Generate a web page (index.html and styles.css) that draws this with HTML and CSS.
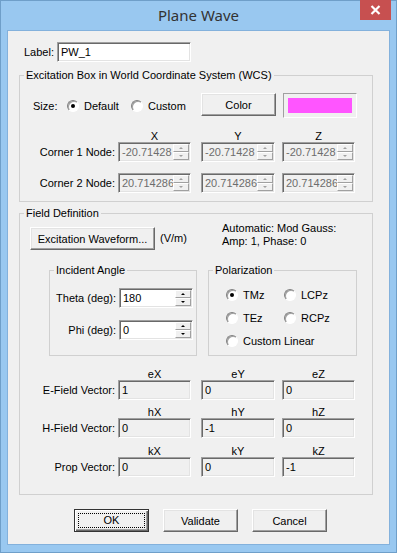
FILE: index.html
```html
<!DOCTYPE html>
<html lang="en">
<head>
    <meta charset="UTF-8">
    <title>Plane Wave</title>
    <link rel="stylesheet" href="styles.css">
</head>
<body>
    <div class="window">
        <div class="titlebar">
            <span></span>
            <div class="title">Plane Wave</div>
            <button class="close" title="Close">
                <svg width="11" height="10" viewBox="0 0 11 10"><path d="M1.5 1 L9.5 9 M9.5 1 L1.5 9" stroke="#fff" stroke-width="2.2" fill="none"/></svg>
            </button>
        </div>

        <div class="client">
            <div class="label-row">
                <span class="label-text">Label:</span>
                <div class="field edit label-field"><span class="val">PW_1</span></div>
            </div>

            <!-- excitation box -->
            <fieldset class="group main-group wcs">
                <legend>Excitation Box in World Coordinate System (WCS)</legend>
                <div class="size-row">
                    <span class="size-label">Size:</span>
                    <span class="opt opt-default"><span class="radio on"></span>Default</span>
                    <span class="opt opt-custom"><span class="radio"></span>Custom</span>
                    <button class="btn color-btn">Color</button>
                    <span class="swatch"><span class="swatch-fill"></span></span>
                </div>
                <div class="coord-row head-row first-head">
                    <span class="row-label"></span>
                    <span class="head c1">X</span>
                    <span class="head c2">Y</span>
                    <span class="head c3">Z</span>
                </div>
                <div class="coord-row">
                    <span class="row-label">Corner 1 Node:</span>
                    <div class="field spin disabled c1"><span class="val">-20.71428</span><span class="spin-btns"><i class="up"></i><i class="down"></i></span></div>
                    <div class="field spin disabled c2"><span class="val">-20.71428</span><span class="spin-btns"><i class="up"></i><i class="down"></i></span></div>
                    <div class="field spin disabled c3"><span class="val">-20.71428</span><span class="spin-btns"><i class="up"></i><i class="down"></i></span></div>
                </div>
                <div class="coord-row second-row">
                    <span class="row-label">Corner 2 Node:</span>
                    <div class="field spin disabled c1"><span class="val">20.714286</span><span class="spin-btns"><i class="up"></i><i class="down"></i></span></div>
                    <div class="field spin disabled c2"><span class="val">20.714286</span><span class="spin-btns"><i class="up"></i><i class="down"></i></span></div>
                    <div class="field spin disabled c3"><span class="val">20.714286</span><span class="spin-btns"><i class="up"></i><i class="down"></i></span></div>
                </div>
            </fieldset>

            <!-- field definition -->
            <fieldset class="group main-group fielddef">
                <legend>Field Definition</legend>
                <div class="wave-row">
                    <button class="btn wave-btn">Excitation Waveform...</button>
                    <span class="units">(V/m)</span>
                    <div class="auto-text">Automatic: Mod Gauss:<br>Amp: 1, Phase: 0</div>
                </div>

                <div class="sub-row">
                    <fieldset class="group sub-group incident">
                        <legend>Incident Angle</legend>
                        <div class="angle-row">
                            <span>Theta (deg):</span>
                            <div class="field spin edit angle"><span class="val">180</span><span class="spin-btns"><i class="up"></i><i class="down"></i></span></div>
                        </div>
                        <div class="angle-row second-angle">
                            <span>Phi (deg):</span>
                            <div class="field spin edit angle"><span class="val">0</span><span class="spin-btns"><i class="up"></i><i class="down"></i></span></div>
                        </div>
                    </fieldset>

                    <fieldset class="group sub-group polar">
                        <legend>Polarization</legend>
                        <div class="polar-grid">
                            <span class="opt"><span class="radio on"></span>TMz</span>
                            <span class="opt"><span class="radio"></span>LCPz</span>
                            <span class="opt"><span class="radio"></span>TEz</span>
                            <span class="opt"><span class="radio"></span>RCPz</span>
                            <span class="opt wide"><span class="radio"></span>Custom Linear</span>
                        </div>
                    </fieldset>
                </div>

                <div class="coord-row head-row vec-head">
                    <span class="row-label"></span>
                    <span class="head c1">eX</span>
                    <span class="head c2">eY</span>
                    <span class="head c3">eZ</span>
                </div>
                <div class="coord-row">
                    <span class="row-label">E-Field Vector:</span>
                    <div class="field ro c1"><span class="val">1</span></div>
                    <div class="field ro c2"><span class="val">0</span></div>
                    <div class="field ro c3"><span class="val">0</span></div>
                </div>
                <div class="coord-row head-row vec-head2">
                    <span class="row-label"></span>
                    <span class="head c1">hX</span>
                    <span class="head c2">hY</span>
                    <span class="head c3">hZ</span>
                </div>
                <div class="coord-row">
                    <span class="row-label">H-Field Vector:</span>
                    <div class="field ro c1"><span class="val">0</span></div>
                    <div class="field ro c2"><span class="val">-1</span></div>
                    <div class="field ro c3"><span class="val">0</span></div>
                </div>
                <div class="coord-row head-row vec-head3">
                    <span class="row-label"></span>
                    <span class="head c1">kX</span>
                    <span class="head c2">kY</span>
                    <span class="head c3">kZ</span>
                </div>
                <div class="coord-row">
                    <span class="row-label">Prop Vector:</span>
                    <div class="field ro c1"><span class="val">0</span></div>
                    <div class="field ro c2"><span class="val">0</span></div>
                    <div class="field ro c3"><span class="val">-1</span></div>
                </div>
            </fieldset>

            <div class="actions">
                <button class="btn action default-btn"><span class="focus">OK</span></button>
                <button class="btn action">Validate</button>
                <button class="btn action">Cancel</button>
            </div>
        </div>
    </div>
</body>
</html>
```

FILE: styles.css
```css
* {
    box-sizing: border-box;
}
body {
    margin: 0;
    font-family: "Liberation Sans", Arial, sans-serif;
    font-size: 11px;
    color: #000;
    background: #99c8f0;
}
.window {
    width: 397px;
    height: 553px;
    background: #99c8f0;
    border: 1px solid #6f9fc9;
    padding: 0 6px;
}
.titlebar {
    display: grid;
    grid-template-columns: 1fr auto 1fr;
    align-items: start;
    height: 29px;
    margin: 0 -6px;
}
.title {
    font-family: "Noto Sans", "Open Sans", sans-serif;
    font-size: 15px;
    color: #333;
    line-height: 29px;
}
.close {
    justify-self: end;
    width: 31px;
    height: 20px;
    margin-right: 5px;
    margin-top: -1px;
    border: none;
    padding: 0;
    background: #c75050;
    display: flex;
    align-items: center;
    justify-content: center;
}
.client {
    height: 515px;
    border: 1px solid #83b1dc;
    background: #f0f0f0;
}

/* generic controls */
.field {
    display: flex;
    align-items: center;
    height: 20px;
    border: 1px solid;
    border-color: #a0a0a0 #fff #fff #a0a0a0;
    box-shadow: inset 1px 1px 0 #696969, inset -1px -1px 0 #e3e3e3;
    background: #f0f0f0;
    overflow: hidden;
    white-space: nowrap;
}
.field .val {
    padding-left: 3px;
    flex: 1;
    overflow: hidden;
    line-height: 16px;
}
.field.edit {
    background: #fff;
}
.field.disabled .val {
    color: #6d6d6d;
}
.spin-btns {
    display: flex;
    flex-direction: column;
    width: 16px;
    height: 16px;
    margin-right: 1px;
    flex: none;
}
.spin-btns i {
    flex: 1;
    display: flex;
    align-items: center;
    justify-content: center;
    background: #f0f0f0;
    border: 1px solid;
    border-color: #fff #a0a0a0 #a0a0a0 #fff;
}
.spin-btns i::after {
    content: "";
    width: 0;
    height: 0;
    border-left: 2px solid transparent;
    border-right: 2px solid transparent;
}
.spin-btns .up::after {
    border-bottom: 2px solid #000;
}
.spin-btns .down::after {
    border-top: 2px solid #000;
}
.disabled .spin-btns .up::after {
    border-bottom-color: #a0a0a0;
}
.disabled .spin-btns .down::after {
    border-top-color: #a0a0a0;
}
.btn {
    font-family: inherit;
    font-size: 11px;
    color: #000;
    height: 23px;
    padding: 0;
    background: #f0f0f0;
    border: 1px solid;
    border-color: #fff #696969 #696969 #fff;
    box-shadow: inset -1px -1px 0 #a0a0a0, inset 1px 1px 0 #e3e3e3;
}
.radio {
    display: inline-flex;
    align-items: center;
    justify-content: center;
    width: 12px;
    height: 12px;
    border-radius: 50%;
    border: 1px solid;
    border-color: #808080 #fff #fff #808080;
    box-shadow: inset 1px 1px 0 #a0a0a0;
    background: #fff;
    margin-right: 5px;
    flex: none;
}
.radio.on::after {
    content: "";
    width: 4px;
    height: 4px;
    border-radius: 50%;
    background: #000;
}
.opt {
    display: flex;
    align-items: center;
    height: 13px;
    white-space: nowrap;
}
.group {
    margin: 0;
    padding: 0;
    min-inline-size: 0;
    border: 1px solid #d0d0d0;
}
.group legend {
    padding: 0 2px;
    margin-left: 4px;
    line-height: 13px;
}

/* label row */
.label-row {
    display: flex;
    align-items: center;
    margin-top: 11px;
    padding-left: 16px;
}
.label-text {
    margin-right: 3px;
}
.label-field {
    width: 134px;
}

/* main groups */
.main-group {
    margin-left: 11px;
    width: 354px;
}
.wcs {
    margin-top: 7px;
    padding-top: 11px;
    padding-bottom: 8px;
}
.size-row {
    display: flex;
    align-items: center;
    height: 25px;
    padding-left: 13px;
}
.size-label {
    width: 34px;
}
.opt-default {
    width: 64px;
}
.opt-custom {
    width: 70px;
}
.color-btn {
    width: 75px;
    align-self: flex-start;
}
.swatch {
    width: 74px;
    height: 25px;
    margin-left: 7px;
    padding: 4px;
    border: 1px solid;
    border-color: #a0a0a0 #fff #fff #a0a0a0;
}
.swatch-fill {
    display: block;
    height: 100%;
    background: #ff55ff;
}
.coord-row {
    display: flex;
    align-items: center;
    height: 20px;
}
.head-row {
    height: 12px;
    line-height: 12px;
}
.first-head {
    margin-top: 11px;
    height: 13px;
}
.second-row {
    margin-top: 11px;
}
.row-label {
    width: 98px;
    padding-right: 3px;
    text-align: right;
    white-space: nowrap;
}
.c1 {
    width: 73px;
    flex: none;
}
.c2 {
    width: 74px;
    margin-left: 10px;
    flex: none;
}
.c3 {
    width: 73px;
    margin-left: 7px;
    flex: none;
}
.head {
    text-align: center;
}

/* field definition */
.fielddef {
    margin-top: 5px;
    padding-bottom: 17px;
}
.wave-row {
    display: flex;
    align-items: flex-start;
    padding-left: 10px;
}
.wave-btn {
    width: 125px;
    margin-top: 7px;
}
.units {
    width: 67px;
    margin-top: 7px;
    padding-left: 5px;
    line-height: 23px;
}
.auto-text {
    margin-top: 2px;
    line-height: 13px;
}
.sub-row {
    display: flex;
    margin-top: 14px;
}
.sub-group {
    height: 92px;
}
.incident {
    width: 148px;
    margin-left: 29px;
    padding-top: 11px;
    padding-right: 3px;
}
.angle-row {
    display: flex;
    align-items: center;
    justify-content: flex-end;
    height: 20px;
}
.second-angle {
    margin-top: 12px;
}
.angle {
    width: 74px;
    margin-left: 3px;
}
.polar {
    width: 149px;
    margin-left: 11px;
    padding-top: 11px;
}
.polar-grid {
    display: grid;
    grid-template-columns: 58px auto;
    grid-auto-rows: 13px;
    row-gap: 10px;
    padding-left: 17px;
}
.polar-grid .wide {
    grid-column: span 2;
}
.vec-head {
    margin-top: 12px;
}
.vec-head2 {
    margin-top: 6px;
}
.vec-head3 {
    margin-top: 7px;
}

/* bottom buttons */
.actions {
    display: flex;
    justify-content: center;
    gap: 14px;
    margin-top: 14px;
    padding-left: 4px;
}
.action {
    width: 75px;
}
.default-btn {
    border: 1px solid #333;
    box-shadow: inset 1px 1px 0 #fff, inset -1px -1px 0 #696969, inset -2px -2px 0 #a0a0a0;
    padding: 3px;
}
.default-btn .focus {
    display: block;
    height: 100%;
    line-height: 13px;
    border: 1px dotted #000;
}
```
